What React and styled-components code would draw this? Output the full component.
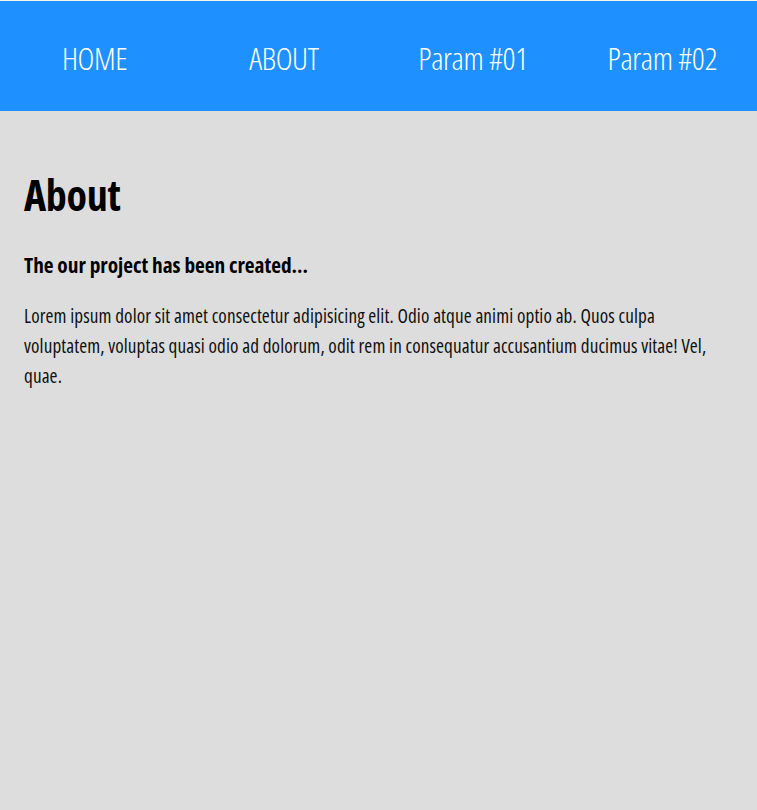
import React from "react";
import styled, { createGlobalStyle } from "styled-components";

const Global = createGlobalStyle`
  html, body { margin: 0; padding: 0; }
  body {
    background: #dddddd;
    font-family: "Open Sans", "Roboto Condensed", "DejaVu Sans", sans-serif;
    font-stretch: 75%;
  }
`;

const Page = styled.div`
  min-height: 809px;
  border-top: 1px solid #f4f4f4;
  background: #dddddd;
`;

const Nav = styled.nav`
  display: flex;
  height: 110px;
  background: #1e90ff;
`;

const NavItem = styled.a`
  flex: 1;
  display: flex;
  align-items: center;
  justify-content: center;
  padding-top: 3px;
  color: #ffffff;
  font-size: 32px;
  font-weight: 300;
  font-stretch: 75%;
  letter-spacing: -0.4px;
  text-decoration: none;
`;

const Content = styled.main`
  padding: 56px 24px 48px;
  color: #000;
`;

const Title = styled.h1`
  margin: 0;
  font-size: 42px;
  font-weight: 700;
  font-stretch: 75%;
  line-height: 56px;
  letter-spacing: -0.3px;
`;

const Subtitle = styled.h3`
  margin: 28px 0 0;
  font-size: 21.3px;
  font-weight: 700;
  font-stretch: 75%;
  line-height: 28px;
`;

const Text = styled.p`
  max-width: 688px;
  margin: 22px 0 0;
  font-size: 19.2px;
  font-weight: 400;
  font-stretch: 75%;
  line-height: 30px;
  letter-spacing: 0.1px;
  color: #111;
`;

export default function App() {
  return (
    <Page>
      <Global />
      <Nav>
        <NavItem href="#">HOME</NavItem>
        <NavItem href="#">ABOUT</NavItem>
        <NavItem href="#">Param #01</NavItem>
        <NavItem href="#">Param #02</NavItem>
      </Nav>
      <Content>
        <Title>About</Title>
        <Subtitle>The our project has been created...</Subtitle>
        <Text>
          Lorem ipsum dolor sit amet consectetur adipisicing elit. Odio atque animi optio ab. Quos culpa
          voluptatem, voluptas quasi odio ad dolorum, odit rem in consequatur accusantium ducimus vitae! Vel,
          quae.
        </Text>
      </Content>
    </Page>
  );
}
